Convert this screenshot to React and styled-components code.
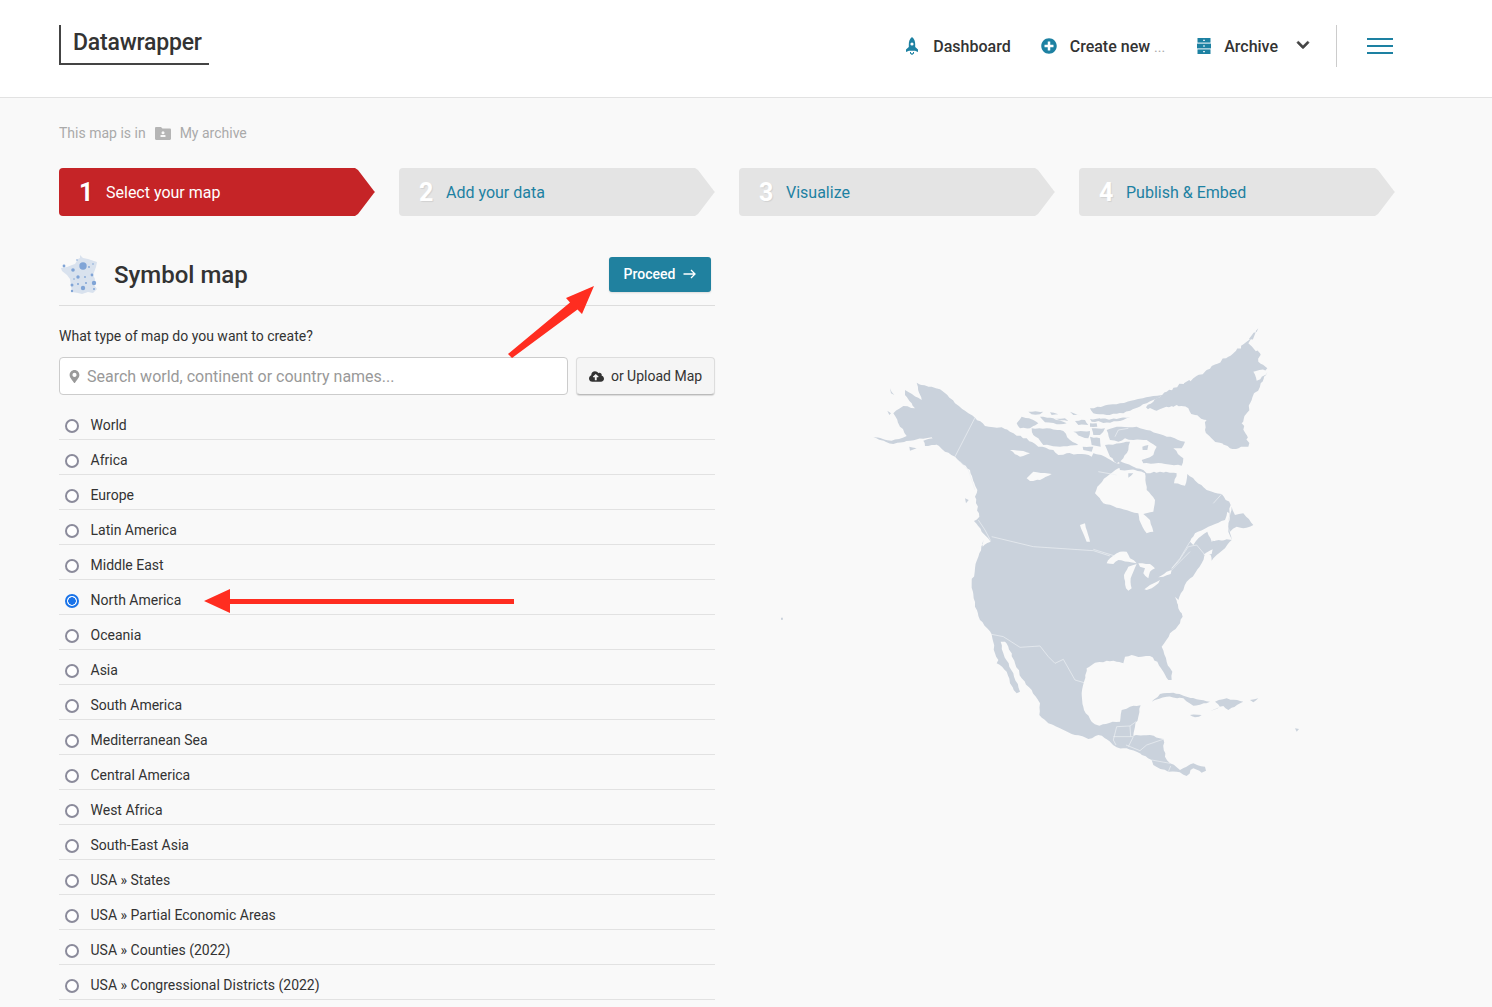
import React from "react";
import styled, { createGlobalStyle } from "styled-components";
import { FaPlusCircle, FaChevronDown, FaCloudUploadAlt, FaMapMarkerAlt } from "react-icons/fa";

const Global = createGlobalStyle`
  html, body { margin: 0; padding: 0; background: #f9f9f9; }
  body { font-family: Roboto, "Liberation Sans", sans-serif; color: #333; -webkit-font-smoothing: antialiased; }
  * { box-sizing: border-box; }
`;

const Page = styled.div`
  position: relative;
  width: 1492px;
  height: 1007px;
  overflow: hidden;
`;
const Header = styled.header`
  height: 98px;
  background: #fff;
  border-bottom: 1px solid #e2e2e2;
  display: flex;
  align-items: flex-start;
  justify-content: space-between;
  padding: 25px 99px 0 59px;
`;
const Logo = styled.div`
  width: 150px;
  height: 40px;
  border-left: 2px solid #444;
  border-bottom: 2px solid #444;
  padding-left: 12px;
  font-size: 23px;
  font-weight: 500;
  line-height: 36px;
  letter-spacing: -0.2px;
  color: #333;
`;
const Nav = styled.nav`
  display: flex;
  align-items: center;
  height: 42px;
`;
const NavItem = styled.div`
  display: flex;
  align-items: center;
  gap: ${(p) => p.$gap || 14}px;
  margin-right: ${(p) => p.$mr ?? 30}px;
  font-size: 16px;
  font-weight: 500;
  color: #333;
  white-space: nowrap;
  svg { flex: none; color: #1d81a2; }
`;
const Dots = styled.span`
  font-size: 14px;
  font-weight: 400;
  color: #aaa;
  margin-left: 4px;
`;
const Chevron = styled(FaChevronDown)`
  color: #444;
  stroke: #444;
  stroke-width: 24px;
  margin: -2px 26px 0 0;
`;
const Divider = styled.div`
  width: 1px;
  height: 42px;
  background: #ccc;
  margin-right: 30px;
`;
const Burger = styled.div`
  width: 26px;
  height: 16px;
  display: flex;
  flex-direction: column;
  justify-content: space-between;
  span { display: block; height: 2px; background: #1d81a2; }
`;
const Main = styled.main`
  padding: 0 97px 0 59px;
`;
const Crumb = styled.div`
  display: flex;
  align-items: center;
  height: 18px;
  margin-top: 26px;
  font-size: 14px;
  color: #aaa;
  gap: 9px;
  svg { flex: none; }
`;
const Steps = styled.div`
  display: grid;
  grid-template-columns: repeat(4, 316px);
  gap: 24px;
  margin-top: 26px;
`;
const Step = styled.div`
  height: 48px;
  display: flex;
  align-items: center;
  gap: 14px;
  padding-left: 20px;
  border-radius: 4px;
  background: ${(p) => (p.$active ? "#c52427" : "#e4e4e4")};
  color: ${(p) => (p.$active ? "#fff" : "#1d81a2")};
  font-size: 16px;
  clip-path: polygon(0 0, calc(100% - 20px) 0, calc(100% - 17px) 2px, calc(100% - 1px) 23px, 100% 24px, calc(100% - 1px) 25px, calc(100% - 17px) 46px, calc(100% - 20px) 100%, 0 100%);
`;
const StepNum = styled.span`
  width: 13px;
  font-size: 25px;
  font-weight: 700;
  color: #fff;
  text-shadow: 1px 1px 1px rgba(0, 0, 0, 0.08);
`;
const Columns = styled.div`
  display: grid;
  grid-template-columns: 656px 656px;
  gap: 24px;
  margin-top: 24px;
`;
const TitleRow = styled.div`
  height: 66px;
  display: flex;
  align-items: center;
  border-bottom: 1px solid #ddd;
  padding: 4px 4px 0 1px;
`;
const Title = styled.h1`
  margin: 0 0 0 14px;
  font-size: 24px;
  font-weight: 500;
  color: #333;
  flex: 1;
`;
const Proceed = styled.button`
  width: 102px;
  height: 35px;
  border: 0;
  padding: 0 0 2px;
  border-radius: 3px;
  background: #20819f;
  color: #fff;
  font: 500 14px Roboto, sans-serif;
  display: flex;
  align-items: center;
  justify-content: center;
  gap: 8px;
  box-shadow: 0 1px 2px rgba(0, 0, 0, 0.12);
`;
const Question = styled.p`
  margin: 21px 0 0;
  height: 18px;
  line-height: 18px;
  font-size: 14px;
  color: #333;
`;
const SearchRow = styled.div`
  display: flex;
  gap: 8px;
  margin-top: 12px;
`;
const SearchBox = styled.div`
  flex: 1;
  height: 38px;
  background: #fff;
  border: 1px solid #ccc;
  border-radius: 4px;
  display: flex;
  align-items: center;
  gap: 6px;
  padding-left: 8px;
  font-size: 16px;
  color: #999;
  svg { flex: none; color: #999; }
`;
const UploadBtn = styled.button`
  width: 139px;
  height: 38px;
  border: 1px solid #ddd;
  border-bottom-color: #bbb;
  border-radius: 4px;
  background: #f5f5f5;
  color: #333;
  font: 400 14px Roboto, sans-serif;
  display: flex;
  align-items: center;
  justify-content: center;
  gap: 7px;
  box-shadow: 0 1px 1px rgba(0, 0, 0, 0.12);
  white-space: nowrap;
`;
const List = styled.div`
  margin-top: 10px;
`;
const Row = styled.label`
  height: 35px;
  display: flex;
  align-items: center;
  gap: 11.5px;
  padding: 6px 0 0 6px;
  border-bottom: 1px solid #e2e2e2;
  font-size: 14px;
  color: #333;
`;
const Radio = styled.input`
  appearance: none;
  width: 14px;
  height: 14px;
  margin: 1px 0 0;
  border-radius: 50%;
  background: ${(p) => (p.checked ? "radial-gradient(circle, #1a73e8 0 3.5px, #fff 4px)" : "#fff")};
  border: 2px solid ${(p) => (p.checked ? "#1a73e8" : "#8b8b9b")};
`;
const MapFigure = styled.svg`
  display: block;
  margin-top: 80px;
  width: 656px;
  height: 480px;
`;
const Annotations = styled.svg`
  position: absolute;
  left: 0;
  top: 0;
  pointer-events: none;
`;

/* ---- icons ---- */
const Rocket = () => (
  <svg width="14" height="18" viewBox="0 0 14 18">
    <path fill="currentColor" d="M7 0C9.4 2 10.2 4.6 10.2 7.2L10.2 10L13 12.6V15L10 13.8H4L1 15V12.6L3.8 10V7.2C3.8 4.600 4.600 2 7 0Z" />
    <circle cx="7" cy="7" r="1.6" fill="#fff" />
    <path fill="currentColor" d="M5 15h1v1.200h2V15h1v1.500L7 18 5 16.500Z" />
  </svg>
);
const Drawers = () => (
  <svg width="14" height="16" viewBox="0 0 14 16">
    <g fill="currentColor">
      <rect x="0.5" y="0" width="13" height="4.6" />
      <rect x="0" y="5.6" width="14" height="4.8" />
      <rect x="0.5" y="11.4" width="13" height="4.6" />
    </g>
    <g fill="#fff">
      <rect x="6" y="1.8" width="2" height="1" />
      <rect x="6" y="7.5" width="2" height="1" />
      <rect x="6" y="13.2" width="2" height="1" />
    </g>
  </svg>
);
const FolderUser = () => (
  <svg width="16" height="13" viewBox="0 0 16 13">
    <path fill="#b5b5b5" d="M0 1.200C0 .5.5 0 1.200 0H6l1.500 1.600h7.300c.7 0 1.200.5 1.200 1.200v9c0 .7-.5 1.200-1.200 1.200H1.200C.5 13 0 12.500 0 11.800Z" />
    <circle cx="8" cy="5.800" r="1.500" fill="#f9f9f9" />
    <rect x="5.500" y="8" width="5" height="2" rx="0.6" fill="#f9f9f9" />
  </svg>
);
const Arrow = () => (
  <svg width="13" height="10" viewBox="0 0 13 10" fill="none" stroke="#fff" strokeWidth="1.3">
    <path d="M0.500 5H12M8 1l4 4-4 4" />
  </svg>
);
const dots = [
  [23, 11, 3.7], [13, 15, 1.8], [4, 11, 1.4], [18, 22, 1.7], [32, 20, 1.4], [34, 28, 2.2], [23, 33, 2.2],
  [12, 30, 1.5], [18, 29, 1], [26, 28, 1], [12, 36, 1.2], [34, 34, 1], [29, 12, 0.9], [17, 5, 0.8], [33, 9, 0.8], [25, 22, 0.9], [14, 24, 0.8],
];
const FranceIcon = () => (
  <svg width="40" height="40" viewBox="0 0 40 40">
    <path fill="#d9e2ee" d="M20 0l3 3 5 1 9 3-1 5-3 8 2 4-1 6 3 4-4 4-5-1-6 2-4-1-6-1-1-6-1-7-3-4-5-4-1-3 6-1 5-2 3-1 3-5 2-1z" />
    <g fill="#80a4d6">
      {dots.map(([x, y, r], i) => (
        <circle key={i} cx={x} cy={y} r={r} />
      ))}
    </g>
  </svg>
);

/* ---- map, traced in a 3x grid; helpers move points from other crops to the same grid ---- */
const shift = (dx, dy) => (pts) => pts.map(([x, y]) => [x + dx, y + dy]);
const low = shift(300, 660);
const arc = shift(450, 225);
const gulf = shift(930, 570);
const lakes = shift(720, 690);

const noise = (a) => {
  const v = Math.sin(a * 12.9898) * 43758.5453;
  return v - Math.floor(v) - 0.5;
};
/* breaks long straight edges into a ragged coastline */
const rough = (pts, amp = 5, step = 11) => {
  const out = [];
  pts.forEach((p, i) => {
    const q = pts[(i + 1) % pts.length];
    const len = Math.hypot(q[0] - p[0], q[1] - p[1]);
    const n = Math.max(1, Math.round(len / step));
    for (let k = 0; k < n; k++) {
      const t = k / n;
      const x = p[0] + (q[0] - p[0]) * t;
      const y = p[1] + (q[1] - p[1]) * t;
      const a = k === 0 ? 0 : amp;
      out.push([+(x + a * noise(x * 1.3 + y)).toFixed(1), +(y + a * noise(y * 1.7 + x * 0.7)).toFixed(1)]);
    }
  });
  return out;
};
const toPath = (pts) => "M" + pts.map((p) => p.join(" ")).join("L") + "Z";
const line = (pts) => "M" + pts.map((p) => p.join(" ")).join("L");

const mainland = [
  [170,188],[185,195],[215,200],[240,208],[262,225],[285,250],[315,272],[345,293],[375,318],[400,322],[425,322],
  ...arc([[0,110],[20,122],[50,130],[85,155],[130,165],[145,180],[170,175],[225,178],[245,185],[250,175],[285,185],[320,205]]),
  [800,440],[850,450],[860,460],[900,455],[950,460],[942,490],[975,497],[982,462],[1040,510],[1085,522],[1112,555],
  ...gulf([[175,30],[178,60],[185,90],[165,115],[140,135],[125,152],[122,135],[110,128],[95,160],[75,190],[50,215],[40,240],[25,270]]),
  ...low([[650,185],[655,205],[668,230],[660,250],[630,280],[605,320],[620,365],[637,395],[635,420],[625,420],[610,395],[592,365],[570,348],[545,350],[515,345],[495,350],[490,370],[470,365],[440,362],[405,368],[380,385],[372,425],[365,460],[372,510],[395,545],[418,557],[450,548],[480,545],[485,510],[510,500],[542,496],[535,530],[525,560],[520,588],[570,585],[610,597],[615,650],[630,670],[660,690],[700,670],[735,680],[738,692],[725,698],[700,685],[680,708],[650,695],[625,695],[580,675],[575,660],[530,635],[500,625],[470,622],[440,598],[415,585],[385,597],[345,585],[300,565],[265,550],[238,525],[240,490],[215,450],[185,415],[165,370],[145,320],[135,305],[122,305],[130,340],[160,400],[180,455],[170,460],[150,430],[140,395],[110,370],[115,360],[105,340],[95,283],[60,240],[45,200],[35,130],[45,85],[58,40],[70,0]]),
  [368,680],[392,665],[365,635],[342,603],[358,590],[345,530],[352,510],[330,450],[300,425],[285,410],[255,395],[225,372],[215,352],[190,356],[150,362],[100,372],[40,352],[95,362],[140,348],[120,320],[100,280],[130,258],[165,265],[135,225],[135,210],[185,240],
];
const greenland = [[1195,25],[1160,65],[1105,110],[1040,150],[1000,175],[920,215],[880,245],[858,262],[890,272],[950,255],[985,265],[1005,285],[1040,300],[1035,330],[1060,360],[1110,385],[1165,380],[1160,345],[1145,310],[1175,240],[1222,155],[1190,182],[1180,155],[1222,145],[1195,125],[1200,100],[1180,85],[1165,70]];
const lands = [
  arc([[20,85],[35,65],[70,75],[85,85],[60,100],[30,100]]),
  arc([[55,50],[100,50],[90,58],[65,58]]),
  arc([[90,65],[130,70],[170,85],[140,88],[105,82]]),
  arc([[120,52],[145,58],[125,60]]),
  arc([[180,50],[215,62],[190,60]]),
  arc([[130,72],[165,70],[175,78],[150,76]]),
  arc([[65,100],[110,100],[160,108],[180,135],[205,150],[150,155],[100,150],[85,130],[70,120]]),
  arc([[195,78],[225,75],[235,90],[205,90]]),
  arc([[240,72],[270,70],[275,78],[245,80]]),
  arc([[265,72],[320,72],[362,65],[330,78],[280,84],[265,78]]),
  arc([[240,85],[260,85],[262,95],[240,95]]),
  arc([[190,110],[240,108],[235,130],[215,125]]),
  arc([[245,100],[285,100],[270,120],[250,120]]),
  arc([[240,125],[270,130],[272,155],[245,150]]),
  arc([[218,155],[250,155],[245,170],[220,165]]),
  arc([[240,40],[330,25],[430,3],[460,0],[410,25],[340,55],[290,60],[250,55]]),
  arc([[290,105],[320,95],[380,95],[440,115],[525,140],[515,160],[490,160],[520,190],[515,212],[455,205],[400,205],[395,195],[430,180],[440,155],[410,135],[370,135],[345,130],[325,140],[300,135]]),
  arc([[285,150],[330,145],[360,140],[355,165],[340,190],[320,205],[300,185]]),
  arc([[397,155],[415,150],[412,165],[398,165]]),
  [[1115,560],[1125,585],[1150,580],[1180,615],[1150,625],[1130,620],[1110,635],[1105,620]],
  low([[575,485],[600,462],[640,458],[680,470],[750,485],[700,497],[670,475],[620,470]]),
  low([[765,485],[800,475],[850,485],[805,510],[790,498],[752,512],[780,500]]),
  low([[690,525],[725,525],[705,532]]),
  low([[870,480],[895,475],[880,487]]),
  low([[1005,565],[1017,567],[1010,575]]),
  [[-237,893],[-231,893],[-232,900],[-237,899]],
  [[90,205],[103,225],[93,220]],
  [[82,272],[93,280],[88,285]],
  [[148,380],[170,385],[150,392]],
  [[190,362],[225,355],[228,375],[195,378]],
  [[315,535],[326,540],[318,550]],
];
const holes = [
  [[712,500],[740,470],[775,445],[800,440],[855,460],[860,510],[885,540],[880,575],[850,582],[870,600],[880,635],[860,640],[838,600],[835,580],[780,565],[730,550],[705,520]],
  arc([[0,165],[40,168],[60,175],[30,185],[15,178]]),
  [[500,475],[520,455],[575,462],[540,480],[510,483]],
  [[660,615],[675,610],[690,665],[680,665]],
  lakes([[20,40],[30,25],[60,5],[80,5],[90,25],[110,40],[85,35],[55,30],[40,42]]),
  lakes([[72,75],[85,50],[110,42],[100,65],[92,85],[95,115],[85,122],[78,115]]),
  lakes([[115,40],[150,42],[165,55],[150,65],[145,85],[130,70],[135,55],[120,50]]),
  lakes([[133,118],[150,105],[180,90],[175,100],[155,115],[140,120]]),
  lakes([[175,82],[200,65],[215,60],[212,72],[190,80]]),
  lakes([[225,140],[240,155],[245,185],[235,165]]),
  gulf([[60,95],[75,70],[115,50],[165,30],[172,5],[178,10],[175,65],[186,90],[170,88],[125,95],[112,65],[85,85],[70,105]]),
  gulf([[100,135],[128,118],[125,132],[108,137]]),
];
const islandsOverBay = [
  arc([[325,195],[345,205],[380,220],[355,225],[330,225]]),
  arc([[355,235],[370,235],[355,248]]),
  gulf([[125,92],[165,92],[175,98],[140,104]]),
];
const borders = [
  [[345,293],[285,410]],
  [[395,650],[520,680],[700,692],[750,708]],
  [[715,455],[770,465]],
  [[1085,522],[1060,550]],
  [[300,425],[325,450],[345,510]],
  [[355,600],[375,630],[392,662]],
  arc([[315,125],[325,105],[355,100]]),
  low([[400,28],[465,48]]),
  lakes([[215,60],[240,35],[270,5]]),
  gulf([[5,175],[30,145],[60,95]]),
  gulf([[5,175],[25,155],[55,110],[80,105],[105,135]]),
  low([[95,283],[130,290],[180,322],[240,318],[265,350],[285,370],[310,358],[345,420],[372,428]]),
  low([[470,560],[510,558],[512,590]]),
  low([[510,558],[528,545]]),
  low([[470,560],[460,600],[468,615]]),
  low([[460,590],[520,590],[505,620]]),
  low([[498,615],[540,632],[560,615],[612,597]]),
  low([[575,660],[630,670]]),
  low([[625,695],[632,678]]),
];

const LAND = "#cad2dc";
const SEA = "#f9f9f9";
const NorthAmerica = () => (
  <MapFigure viewBox="739 320 656 480">
    <g transform="translate(860 320) scale(0.33333)">
      <path d={toPath(rough(mainland))} fill={LAND} />
      <path d={toPath(rough(greenland, 9, 9))} fill={LAND} />
      {holes.map((h, i) => (
        <path key={i} d={toPath(rough(h, 3))} fill={SEA} />
      ))}
      {lands.concat(islandsOverBay).map((l, i) => (
        <path key={i} d={toPath(rough(l, 4))} fill={LAND} />
      ))}
      {borders.map((b, i) => (
        <path key={i} d={line(b)} fill="none" stroke="#eff2f5" strokeWidth="2" />
      ))}
    </g>
  </MapFigure>
);

const regions = [
  "World", "Africa", "Europe", "Latin America", "Middle East", "North America", "Oceania", "Asia", "South America",
  "Mediterranean Sea", "Central America", "West Africa", "South-East Asia", "USA » States", "USA » Partial Economic Areas",
  "USA » Counties (2022)", "USA » Congressional Districts (2022)",
];
const steps = ["Select your map", "Add your data", "Visualize", "Publish & Embed"];

export default function App() {
  return (
    <Page>
      <Global />
      <Header>
        <Logo>Datawrapper</Logo>
        <Nav>
          <NavItem><Rocket />Dashboard</NavItem>
          <NavItem $gap={13} $mr={32}><FaPlusCircle size={16} /><span>Create new<Dots>...</Dots></span></NavItem>
          <NavItem $mr={18} $gap={13}><Drawers />Archive</NavItem>
          <Chevron size={14} />
          <Divider />
          <Burger><span /><span /><span /></Burger>
        </Nav>
      </Header>
      <Main>
        <Crumb>This map is in <FolderUser /> My archive</Crumb>
        <Steps>
          {steps.map((s, i) => (
            <Step key={s} $active={i === 0}>
              <StepNum>{i + 1}</StepNum>
              {s}
            </Step>
          ))}
        </Steps>
        <Columns>
          <section>
            <TitleRow>
              <FranceIcon />
              <Title>Symbol map</Title>
              <Proceed>Proceed <Arrow /></Proceed>
            </TitleRow>
            <Question>What type of map do you want to create?</Question>
            <SearchRow>
              <SearchBox><FaMapMarkerAlt size={13} />Search world, continent or country names...</SearchBox>
              <UploadBtn><FaCloudUploadAlt size={15} />or Upload Map</UploadBtn>
            </SearchRow>
            <List>
              {regions.map((r) => (
                <Row key={r}>
                  <Radio type="radio" name="basemap" checked={r === "North America"} readOnly />
                  {r}
                </Row>
              ))}
            </List>
          </section>
          <section>
            <NorthAmerica />
          </section>
        </Columns>
      </Main>
      <Annotations width="1492" height="1007" viewBox="0 0 1492 1007">
        <g fill="#ff2d20">
          <path d="M508 354L570 302.500L566 298L594 286L582 314L577.500 309.500L512 358Z" />
          <path d="M514 599H230V589L204 601L230 613V604H514Z" />
        </g>
      </Annotations>
    </Page>
  );
}
